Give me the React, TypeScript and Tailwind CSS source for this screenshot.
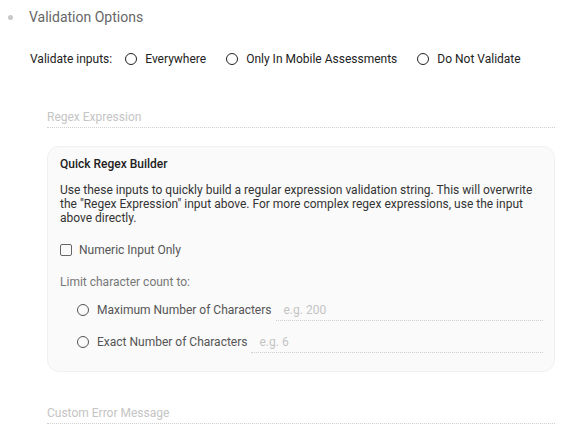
const Radio = ({ label }: { label: string }) => (
  <label className="flex items-center gap-[8px]">
    <span className="h-[12px] w-[12px] rounded-full border-[1.5px] border-[#222]" />
    <span>{label}</span>
  </label>
);

const SmallRadio = ({ label }: { label: string }) => (
  <span className="flex shrink-0 items-center gap-[8px] leading-[16px]">
    <span className="h-[12px] w-[12px] rounded-full border-[1.5px] border-[#555]" />
    <span>{label}</span>
  </span>
);

const UnderlineInput = ({ placeholder, className }: { placeholder: string; className?: string }) => (
  <div className={`border-b border-dotted border-[#cfcfcf] pb-[2px] leading-[16px] text-[#c4c4c4] ${className ?? ''}`}>
    {placeholder}
  </div>
);

export default function App() {
  return (
    <div className="h-[428px] w-[582px] overflow-hidden bg-white font-['Roboto',sans-serif]">
      <div className="flex items-center pl-[8px] pt-[7px] text-[14px] leading-[20px] text-[#666]">
        <span className="h-[5px] w-[5px] rounded-full bg-[#c8c8c8]" />
        <span className="ml-[16px]">Validation Options</span>
      </div>

      <div className="mt-[23px] flex items-center gap-[20px] pl-[30px] text-[12px] leading-[18px] text-[#222]">
        <span className="mr-[-7px]">Validate inputs:</span>
        <Radio label="Everywhere" />
        <Radio label="Only In Mobile Assessments" />
        <Radio label="Do Not Validate" />
      </div>

      <div className="ml-[47px] mr-[27px] mt-[41px] text-[12px]">
        <UnderlineInput placeholder="Regex Expression" />

        <div className="mt-[18px] rounded-[12px] border border-[#f0f0f0] bg-[#fafafa] pb-[18px] pl-[12px] pr-[11px] pt-[9px] text-[#333]">
          <div className="font-medium leading-[16px] text-[#222]">Quick Regex Builder</div>
          <p className="mt-[11px] leading-[14px]">
            Use these inputs to quickly build a regular expression validation string. This will overwrite the "Regex
            Expression" input above. For more complex regex expressions, use the input above directly.
          </p>
          <label className="mt-[17px] flex items-center gap-[7px] leading-[16px] text-[#555]">
            <span className="h-[12px] w-[12px] rounded-[2px] border-[1.5px] border-[#666]" />
            <span>Numeric Input Only</span>
          </label>
          <div className="mt-[16px] leading-[16px] text-[#777]">Limit character count to:</div>
          <div className="mt-[12px] flex flex-col gap-[13px] pl-[17px] text-[#555]">
            <div className="flex items-start gap-[4px]">
              <SmallRadio label="Maximum Number of Characters" />
              <UnderlineInput placeholder="e.g. 200" className="flex-1 pl-[8px]" />
            </div>
            <div className="flex items-start gap-[4px]">
              <SmallRadio label="Exact Number of Characters" />
              <UnderlineInput placeholder="e.g. 6" className="flex-1 pl-[8px]" />
            </div>
          </div>
        </div>

        <UnderlineInput placeholder="Custom Error Message" className="mt-[33px]" />
      </div>
    </div>
  );
}
